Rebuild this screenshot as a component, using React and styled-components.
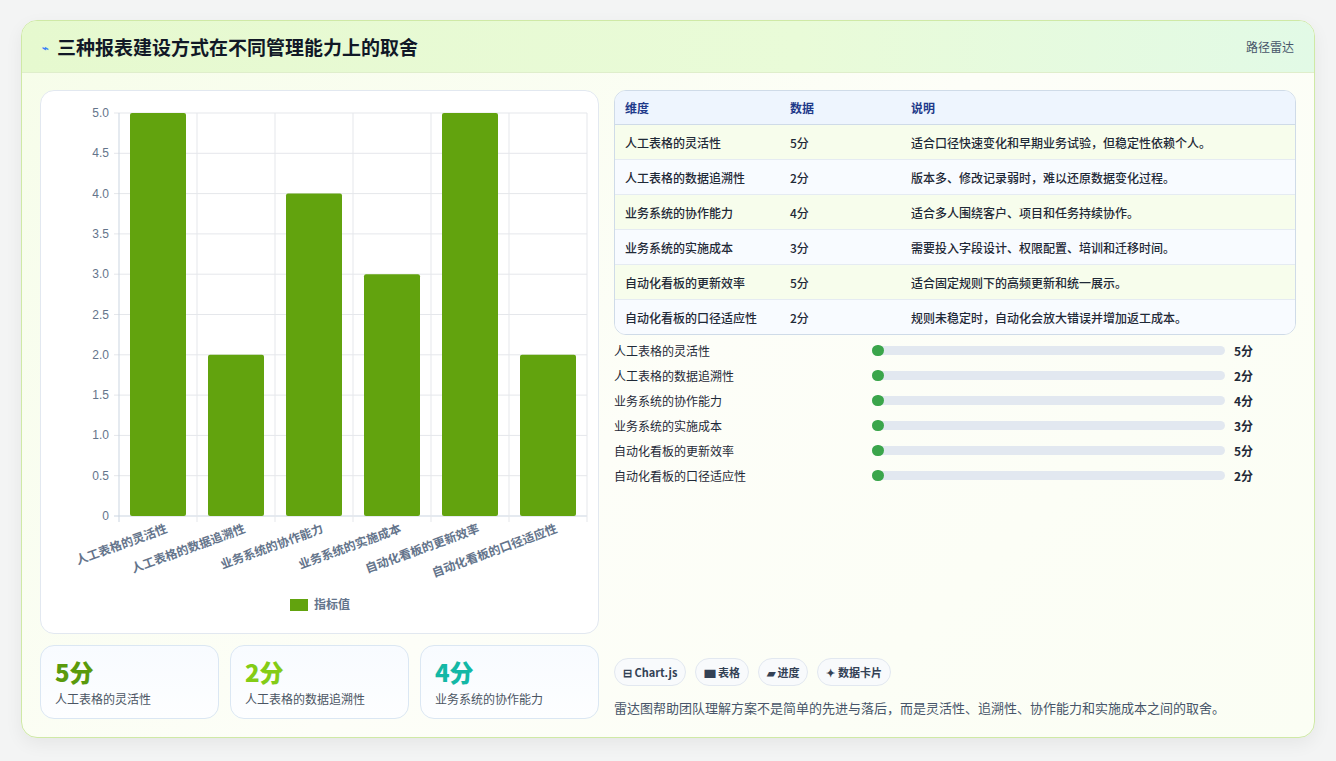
import React from "react";
import styled, { createGlobalStyle } from "styled-components";

const G = createGlobalStyle`
  html,body{margin:0;padding:0;background:#f3f4f4;}
  body{font-family:"Noto Sans CJK SC","Noto Sans",sans-serif;color:#1f2937;}
`;
const Page = styled.div`padding:20px 21px 20px 21px;`;
const Card = styled.div`
  border:1px solid #cfe9a6;border-radius:16px;overflow:hidden;height:718px;box-sizing:border-box;
  background:linear-gradient(135deg,#f6fde9 0%,#fdfef8 50%,#fbfef4 100%);
  box-shadow:0 6px 18px rgba(0,0,0,0.06);display:flex;flex-direction:column;
`;
const Header = styled.div`
  height:54px;box-sizing:border-box;display:flex;align-items:center;justify-content:space-between;
  padding:0 20px;border-bottom:1px solid #dfeecb;
  background:linear-gradient(90deg,#e6f9cf 0%,#e9fbd8 60%,#e2fae6 100%);
`;
const Title = styled.h1`margin:0;font-size:19px;font-weight:700;color:#111827;display:flex;align-items:center;gap:8px;`;
const Bolt = styled.span`font-size:11px;color:#3b82f6;`;
const Side = styled.span`font-size:12px;color:#475569;`;
const Body = styled.div`flex:1;display:grid;grid-template-columns:559px 1fr;gap:15px;padding:17px 18px 18px 18px;`;
const Col = styled.div`display:flex;flex-direction:column;gap:11px;min-width:0;`;
const ChartBox = styled.div`height:544px;box-sizing:border-box;border:1px solid #e2e8f0;border-radius:14px;background:#fff;`;
const Stats = styled.div`display:grid;grid-template-columns:repeat(3,1fr);gap:11px;`;
const Stat = styled.div`border:1px solid #dbe7f3;border-radius:14px;height:74px;box-sizing:border-box;padding:10px 14px;
  background:linear-gradient(180deg,#f8fbff,#fdfeff);`;
const Big = styled.div`font-size:24px;font-weight:800;line-height:32px;color:${p=>p.c};`;
const Small = styled.div`font-size:12px;color:#4b5563;margin-top:2px;`;
const TableWrap = styled.div`border:1px solid #cfdbe8;border-radius:12px;overflow:hidden;background:#fff;`;
const Table = styled.table`width:100%;border-collapse:collapse;font-size:12px;`;
const Th = styled.th`text-align:left;font-weight:700;color:#1e3a8a;background:#eef5fe;height:33px;padding:0 10px;border-bottom:1px solid #cfdbe8;`;
const Td = styled.td`height:34px;padding:0 10px;color:#1f2937;font-weight:500;border-top:1px solid #e5ebf2;
  background:${p=>p.odd?"#f8fbff":"#f7fdec"};`;
const Bars = styled.div`display:flex;flex-direction:column;gap:6px;margin-top:6px;`;
const BarRow = styled.div`display:grid;grid-template-columns:258px 353px 1fr;align-items:center;height:19px;font-size:12px;`;
const Track = styled.div`height:9px;background:#e2e8f0;border-radius:5px;position:relative;`;
const Fill = styled.div`height:11px;width:12px;border-radius:6px;background:#3aa54b;position:absolute;top:-1px;left:0;`;
const Val = styled.span`font-weight:700;padding-left:9px;`;
const Spacer = styled.div`flex:1;`;
const Chips = styled.div`display:flex;gap:9px;`;
const Chip = styled.span`border:1px solid #e2e8f0;border-radius:14px;background:#f8fafc;padding:0 8px;height:26px;
  display:inline-flex;align-items:center;font-size:11px;font-weight:700;color:#334155;gap:3px;`;
const Note = styled.p`margin:12px 0 2px;font-size:13px;color:#475569;`;

const dims=["人工表格的灵活性","人工表格的数据追溯性","业务系统的协作能力","业务系统的实施成本","自动化看板的更新效率","自动化看板的口径适应性"];
const vals=[5,2,4,3,5,2];
const desc=["适合口径快速变化和早期业务试验，但稳定性依赖个人。","版本多、修改记录弱时，难以还原数据变化过程。","适合多人围绕客户、项目和任务持续协作。","需要投入字段设计、权限配置、培训和迁移时间。","适合固定规则下的高频更新和统一展示。","规则未稳定时，自动化会放大错误并增加返工成本。"];

function Chart(){
  const x0=78,x1=546,y0=22,y1=425,cw=(x1-x0)/6;
  const yv=v=>y1-(v/5)*(y1-y0);
  const ticks=[0,0.5,1,1.5,2,2.5,3,3.5,4,4.5,5];
  return (
    <svg width="558" height="542" style={{display:"block"}}>
      {ticks.map(t=>(<g key={t}>
        <line x1={x0-5} x2={x1} y1={yv(t)} y2={yv(t)} stroke={t===0?"#cbd5e1":"#e5e7eb"}/>
        <text x={x0-10} y={yv(t)+4} fontSize="12" fill="#64748b" textAnchor="end" fontFamily="Liberation Sans">{t===0?"0":t.toFixed(1)}</text>
      </g>))}
      {[0,1,2,3,4,5,6].map(i=><line key={i} x1={x0+i*cw} x2={x0+i*cw} y1={y0} y2={y1+6} stroke={i===0?"#cbd5e1":"#e5e7eb"}/>)}
      {vals.map((v,i)=><rect key={i} x={x0+i*cw+11} y={yv(v)} width={cw-22} height={y1-yv(v)} fill="#62a30e" rx="2"/>)}
      {dims.map((d,i)=><text key={i} transform={`translate(${x0+i*cw+cw/2+10},${y1+16}) rotate(-20)`} textAnchor="end" fontSize="12" fontWeight="700" fill="#64748b">{d}</text>)}
      <rect x="249" y="508" width="18" height="12" fill="#62a30e"/>
      <text x="273" y="518" fontSize="12" fill="#64748b" fontWeight="600">指标值</text>
    </svg>
  );
}

export default function App(){
  return (<Page><G/>
    <Card>
      <Header><Title><Bolt>⌁</Bolt>三种报表建设方式在不同管理能力上的取舍</Title><Side>路径雷达</Side></Header>
      <Body>
        <Col>
          <ChartBox><Chart/></ChartBox>
          <Stats>
            <Stat><Big c="#5a9a0c">5分</Big><Small>人工表格的灵活性</Small></Stat>
            <Stat><Big c="#84cc16">2分</Big><Small>人工表格的数据追溯性</Small></Stat>
            <Stat><Big c="#14b8a6">4分</Big><Small>业务系统的协作能力</Small></Stat>
          </Stats>
        </Col>
        <Col style={{gap:0}}>
          <TableWrap><Table>
            <thead><tr><Th style={{width:145}}>维度</Th><Th style={{width:101}}>数据</Th><Th>说明</Th></tr></thead>
            <tbody>{dims.map((d,i)=><tr key={i}><Td odd={i%2}>{d}</Td><Td odd={i%2}>{vals[i]}分</Td><Td odd={i%2}>{desc[i]}</Td></tr>)}</tbody>
          </Table></TableWrap>
          <Bars>{dims.map((d,i)=><BarRow key={i}><span>{d}</span><Track><Fill/></Track><Val>{vals[i]}分</Val></BarRow>)}</Bars>
          <Spacer/>
          <Chips><Chip>⊟ Chart.js</Chip><Chip>▆ 表格</Chip><Chip>▰ 进度</Chip><Chip>✦ 数据卡片</Chip></Chips>
          <Note>雷达图帮助团队理解方案不是简单的先进与落后，而是灵活性、追溯性、协作能力和实施成本之间的取舍。</Note>
        </Col>
      </Body>
    </Card>
  </Page>);
}
